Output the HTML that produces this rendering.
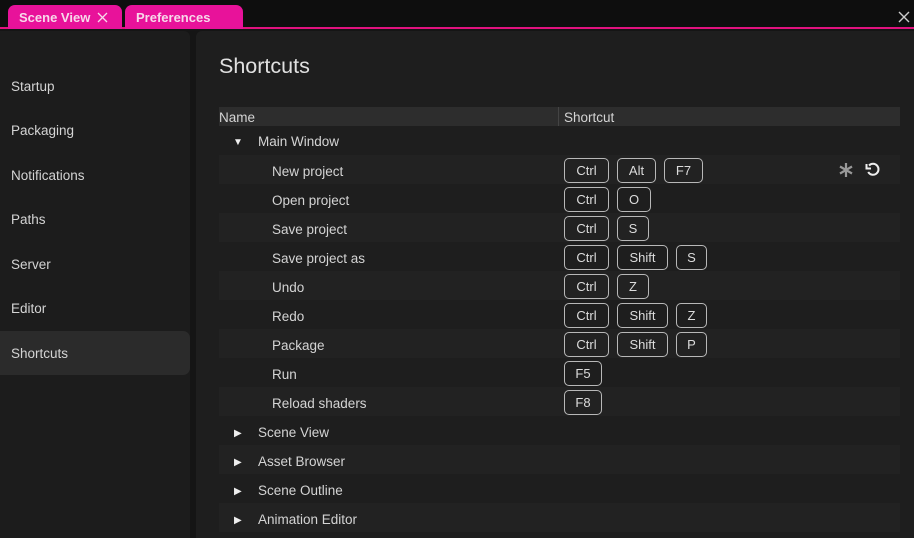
<!DOCTYPE html>
<html><head><meta charset="utf-8"><style>
*{margin:0;padding:0;box-sizing:border-box}
body{width:914px;height:538px;overflow:hidden;background:#151515;font-family:"Liberation Sans",sans-serif;color:#d8d8d8;position:relative}
.a{position:absolute}
.top{left:0;top:0;width:914px;height:29px;background:#0e0e0e;border-bottom:2px solid #e0127e}
.tab{top:5px;height:24px;background:#e8129a;border-radius:7px 7px 0 0;color:#f7d9ea;font-weight:bold;font-size:13px;line-height:25px;padding-left:11px}
.side{left:0;top:31px;width:190px;height:507px;background:#1c1c1c;border-top-right-radius:6px}
.main{left:196px;top:31px;width:718px;height:507px;background:#1e1e1e;border-top-left-radius:6px}
.si{left:11px;font-size:13.5px;color:#d4d4d4}
.row{left:219px;width:681px;height:29px}
.lbl{font-size:13.5px;color:#d4d4d4;margin-top:1px}
.key{position:absolute;height:25px;border:1.5px solid #b8b8b8;border-radius:5px;text-align:center;font-size:13px;line-height:23px;color:#dcdcdc}
.tri{font-size:10px;color:#eee}
</style></head><body>
<div class="a top"></div>
<div class="a tab" style="left:8px;width:114px">Scene View <svg width="11" height="11" style="margin-left:3px;vertical-align:-1px" viewBox="0 0 11 11"><path d="M1 1L10 10M10 1L1 10" stroke="#f7d9ea" stroke-width="1.3"/></svg></div>
<div class="a tab" style="left:125px;width:118px">Preferences</div>
<svg class="a" style="left:898px;top:11px" width="12" height="12" viewBox="0 0 12 12"><path d="M1 1L11 11M11 1L1 11" stroke="#ccc" stroke-width="1.4"/></svg>
<div class="a side"></div>
<div class="a" style="left:0;top:331px;width:190px;height:44px;background:#2b2b2b;border-radius:0 7px 7px 0"></div>
<div class="a si" style="top:79px">Startup</div>
<div class="a si" style="top:123px">Packaging</div>
<div class="a si" style="top:168px">Notifications</div>
<div class="a si" style="top:212px">Paths</div>
<div class="a si" style="top:257px">Server</div>
<div class="a si" style="top:301px">Editor</div>
<div class="a si" style="top:346px">Shortcuts</div>
<div class="a main"></div>
<div class="a" style="left:219px;top:54px;font-size:21.5px;color:#e0e0e0">Shortcuts</div>
<div class="a" style="left:219px;top:107px;width:681px;height:19px;background:#2d2d2d"></div>
<div class="a" style="left:558px;top:107px;width:1px;height:19px;background:#444"></div>
<div class="a lbl" style="left:219px;top:109px">Name</div>
<div class="a lbl" style="left:564px;top:109px">Shortcut</div>

<div class="a row" style="top:155px;background:#222"></div>
<div class="a row" style="top:213px;background:#222"></div>
<div class="a row" style="top:271px;background:#222"></div>
<div class="a row" style="top:329px;background:#222"></div>
<div class="a row" style="top:387px;background:#222"></div>
<div class="a row" style="top:445px;background:#222"></div>
<div class="a row" style="top:503px;background:#222"></div>

<div class="a tri" style="left:233px;top:137px">▼</div>
<div class="a lbl" style="left:258px;top:133px">Main Window</div>
<div class="a lbl" style="left:272px;top:163px">New project</div>
<div class="a lbl" style="left:272px;top:192px">Open project</div>
<div class="a lbl" style="left:272px;top:221px">Save project</div>
<div class="a lbl" style="left:272px;top:250px">Save project as</div>
<div class="a lbl" style="left:272px;top:279px">Undo</div>
<div class="a lbl" style="left:272px;top:308px">Redo</div>
<div class="a lbl" style="left:272px;top:337px">Package</div>
<div class="a lbl" style="left:272px;top:366px">Run</div>
<div class="a lbl" style="left:272px;top:395px">Reload shaders</div>
<div class="a tri" style="left:234px;top:428px">▶</div><div class="a lbl" style="left:258px;top:424px">Scene View</div>
<div class="a tri" style="left:234px;top:457px">▶</div><div class="a lbl" style="left:258px;top:453px">Asset Browser</div>
<div class="a tri" style="left:234px;top:486px">▶</div><div class="a lbl" style="left:258px;top:482px">Scene Outline</div>
<div class="a tri" style="left:234px;top:515px">▶</div><div class="a lbl" style="left:258px;top:511px">Animation Editor</div>

<div class="key" style="left:564px;top:158px;width:45px">Ctrl</div><div class="key" style="left:617px;top:158px;width:39px">Alt</div><div class="key" style="left:664px;top:158px;width:39px">F7</div>
<div class="key" style="left:564px;top:187px;width:45px">Ctrl</div><div class="key" style="left:617px;top:187px;width:34px">O</div>
<div class="key" style="left:564px;top:216px;width:45px">Ctrl</div><div class="key" style="left:617px;top:216px;width:32px">S</div>
<div class="key" style="left:564px;top:245px;width:45px">Ctrl</div><div class="key" style="left:617px;top:245px;width:51px">Shift</div><div class="key" style="left:676px;top:245px;width:31px">S</div>
<div class="key" style="left:564px;top:274px;width:45px">Ctrl</div><div class="key" style="left:617px;top:274px;width:32px">Z</div>
<div class="key" style="left:564px;top:303px;width:45px">Ctrl</div><div class="key" style="left:617px;top:303px;width:51px">Shift</div><div class="key" style="left:676px;top:303px;width:31px">Z</div>
<div class="key" style="left:564px;top:332px;width:45px">Ctrl</div><div class="key" style="left:617px;top:332px;width:51px">Shift</div><div class="key" style="left:676px;top:332px;width:31px">P</div>
<div class="key" style="left:564px;top:361px;width:38px">F5</div>
<div class="key" style="left:564px;top:390px;width:38px">F8</div>

<svg class="a" style="left:839px;top:163px" width="14" height="14" viewBox="0 0 14 14"><path d="M7 0V14M1 3.5L13 10.5M13 3.5L1 10.5" stroke="#999" stroke-width="2.2"/></svg>
<svg class="a" style="left:865px;top:162px" width="16" height="16" viewBox="0 0 16 16"><path d="M4 3.5A5.5 5.5 0 1 1 3.2 10" fill="none" stroke="#eee" stroke-width="2"/><path d="M1.5 2V6.5H6" fill="none" stroke="#eee" stroke-width="2"/></svg>
</body></html>
